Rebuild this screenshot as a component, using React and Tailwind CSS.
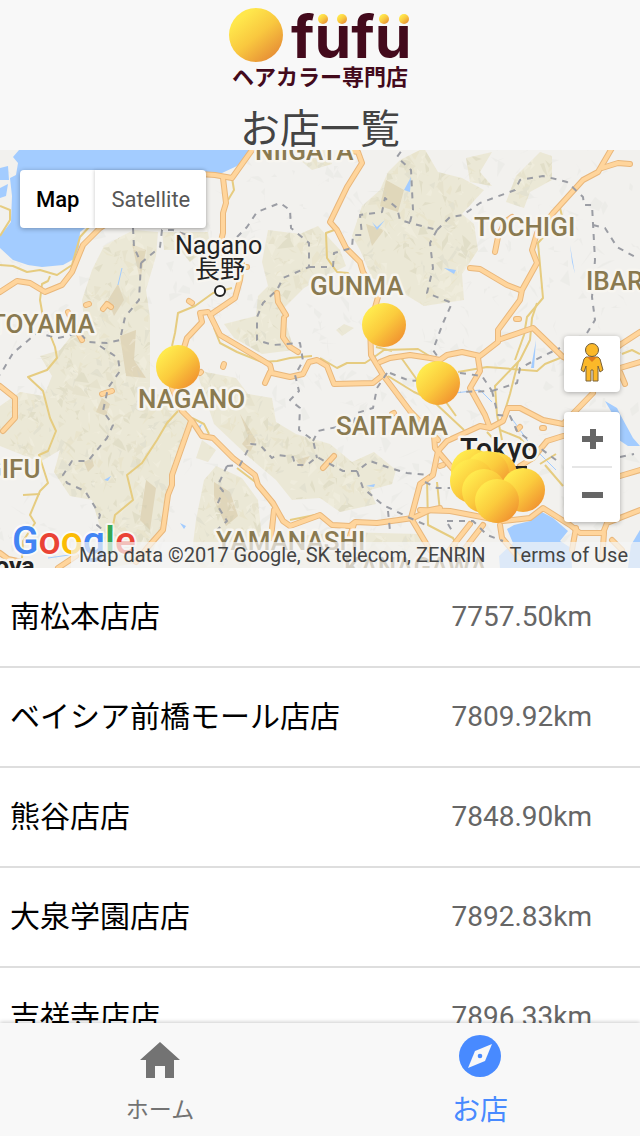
import React from "react";

const shops = [
  { name: "南松本店店", distance: "7757.50km" },
  { name: "ベイシア前橋モール店店", distance: "7809.92km" },
  { name: "熊谷店店", distance: "7848.90km" },
  { name: "大泉学園店店", distance: "7892.83km" },
  { name: "吉祥寺店店", distance: "7896.33km" },
];

const water = [
  "M19 150 L13 157 L18 163 L16 175 L10 178 L12 196 L11 222 L0 236 V248 L13 260 L28 265 L42 267 L63 265 L74 259 L79 247 L80 232 L100 216 L150 190 L200 174 L222 173 L237 166 L252 150 Z",
  "M0 168 L8 166 L9 180 L0 180 Z M0 188 L8 184 L6 196 L0 198 Z",
  "M507 529 L514 525 L530 521 L540 511 L553 518 L568 531 L560 541 L571 548 L572 568 H500 L499 556 L513 543 Z",
  "M640 530 L631 545 L628 568 H640 Z",
  "M605 401 L617 408 L621 416 L633 438 L640 446 L628 446 L619 440 L615 418 Z",
  "M404 190 L411 177 L410 192 Z M372 222 L377 230 L385 220 L377 227 Z M444 268 L456 270 L454 274 Z M104 480 L111 476 L108 481 Z M197 427 L202 424 L200 429 Z",
  "M570 245 L575 274 L572 262 Z M536 340 L531 368 L534 368 Z M366 486 L375 484 L374 487 Z M180 523 L186 526 L184 529 Z",
];

const terrain =
  "M104 246 L122 236 L134 230 L158 232 L156 256 L146 290 L150 318 L150 392 L184 402 L192 430 L174 460 L164 520 L150 560 L110 568 L104 540 L92 500 L70 496 L54 472 L60 450 L40 462 L0 446 V406 L20 392 L44 396 L52 376 L40 356 L60 350 L84 320 L82 300 L92 270 Z M162 232 L208 232 L210 246 L190 262 L180 250 L164 250 Z M268 230 L300 234 L318 226 L340 250 L346 266 L326 276 L304 288 L282 310 L294 350 L262 354 L234 338 L224 324 L256 316 L258 296 L268 286 L262 262 Z M352 236 L362 206 L380 190 L388 172 L400 160 L424 148 L438 172 L462 178 L484 190 L462 214 L474 224 L478 250 L462 274 L464 300 L424 306 L398 290 L372 278 L360 250 Z M466 158 L492 152 L480 172 L492 186 L470 182 Z M516 176 L540 152 L552 156 L552 180 L530 192 L524 208 L506 202 Z M196 370 L236 378 L248 394 L272 398 L276 422 L296 434 L330 444 L352 462 L374 452 L396 470 L392 484 L370 490 L376 504 L340 512 L320 498 L292 500 L276 480 L250 458 L214 424 Z M216 466 L242 478 L258 500 L262 540 L250 568 H190 L196 520 L204 480 Z M288 150 L326 150 L332 164 L312 170 Z M300 536 L340 532 L420 534 L430 568 H294 Z M336 330 L344 324 L354 328 L342 336 Z M202 440 L216 450 L208 462 L196 458 Z";

const ridges = [
  "M120 336 L136 330 L134 360 L146 378 L126 376 Z M108 300 L118 284 L124 300 L114 316 Z",
  "M102 398 L110 404 L106 416 L96 412 Z M84 462 L92 458 L94 466 L88 472 Z",
  "M146 480 L156 488 L150 530 L140 520 Z M132 244 L146 250 L140 280 Z",
  "M214 482 L230 492 L238 516 L226 526 L214 500 Z M240 414 L256 440 L250 452 L242 444 L248 436 Z",
  "M386 180 L404 190 L398 212 L380 206 Z M366 224 L384 230 L372 246 Z M296 460 L310 456 L302 468 Z",
];

const highways = [
  "M0 292 L17 281 L30 283 L45 292 L62 285 L72 272 L83 245 L100 228 L150 196 L200 174 L215 175 L232 178 L252 150",
  "M223 178 L226 203 L223 213 L223 233 L218 252 L242 264 L240 280 L235 298 L210 315 L220 335 L237 345 L257 357 L270 365 L272 373 L290 377 L303 374 L309 362 L317 360 L327 366 L334 384 L373 383 L383 375",
  "M270 372 L265 383",
  "M345 150 L358 152 L362 163 L347 187 L330 222 L337 230 L346 248 L360 262 L363 272 L378 297 L370 325 L371 355 L383 375 L410 411 L438 440",
  "M380 362 L390 358 L410 355 L430 358 L440 360 L447 355 L462 352 L480 356 L498 342 L498 330 L520 300 L522 290 L537 263 L532 250 L537 233 L553 213 L583 180 L598 172 L612 148",
  "M602 168 L618 163 L630 164",
  "M470 268 L480 269 L507 285 L520 290",
  "M512 217 L505 222 L498 237 L495 252",
  "M498 340 L533 328 L563 357 L590 368 L620 345 L640 332",
  "M516 319 L519 319",
  "M208 312 L200 313 L202 322 L187 338 L178 367 L172 388 L182 411 L192 421 L202 436 L213 438 L233 458 L255 475 L258 485 L273 503 L283 521 L290 526 L320 515 L332 525 L350 526 L355 522 L377 523 L413 518 L430 510 L440 508",
  "M191 421 L172 475 L172 485 L168 495 L163 530 L147 548 L136 562",
  "M0 386 L15 398 L15 418 L3 431",
  "M0 553 L8 559 L22 562 M58 568 L76 556",
  "M274 510 L271 538 M354 524 L350 536",
  "M277 293 L278 302 L286 315 M284 318 L283 337 L290 347 L298 352",
  "M323 468 L334 456 M102 394 L112 391 M86 305 L89 304 M103 309 L107 304 L111 307 M68 312 L74 325 L82 340 M189 301 L192 303 M224 364 L223 367 M200 373 L201 372 M392 414 L394 413 M246 267 L247 267",
  "M478 358 L480 371 L470 388 L485 415 L490 428 L480 426 L447 441 L438 451 L433 475 L420 484 L411 518 L430 550",
  "M434 436 L435 448 L452 468 M440 466 L443 465",
  "M490 428 L503 421 L508 408 L520 408 L543 420 L563 424 L593 393",
  "M563 436 L547 441 L533 458 L520 466 M518 429 L520 427 M542 428 L544 428",
  "M420 510 L450 511 L487 518 L503 521 L530 518 L543 508 L570 525 L580 533 L603 533 L607 523 L640 510",
  "M576 528 L572 550 M604 533 L602 560 M612 540 L622 550",
  "M483 525 L463 551 M500 525 L502 538 L519 558 M620 476 L640 470 M620 372 L625 384 M620 368 L640 362 M470 524 L448 552",
];

const roads = [
  "M0 265 L13 266 L27 272 L40 270 L57 275 L72 265 L80 237 L90 226",
  "M50 276 L48 281 L42 284 L40 300 L43 317 L55 347 L57 358 L47 370 L28 377 L43 391 L50 418 L56 431 L48 451 L39 455 L48 483 L40 491 L30 515 L35 523 L23 541 L22 558",
  "M23 495 L40 494",
  "M178 411 L167 423 L157 440 L142 463 L127 475 L133 500 L115 515 L112 531",
  "M0 206 L10 210 L10 220 L0 236",
  "M232 288 L213 293 L195 306 L178 313 L175 333 L172 346",
  "M337 229 L326 233 L327 258 L337 272 L348 273 L356 284",
  "M232 178 L234 190 L228 200",
  "M214 328 L220 343 L237 352 L262 362 L277 361 L290 358 L312 356",
  "M320 358 L337 368 L347 363 L365 363 L377 355 L384 350 L418 349 L436 360 M376 347 L392 351 M400 356 L420 384 M388 376 L414 392 L432 400",
  "M560 208 L562 216 L538 243 L543 298 L527 317 L524 335 L515 360",
  "M537 303 L532 318 L530 340 L520 360 L495 386 L497 415 L502 440",
  "M518 362 L510 394 L502 420",
  "M458 372 L487 367 L537 371 L545 364 L560 358",
  "M433 401 L464 430 M446 402 L456 416 M237 468 L258 484 L272 506 M290 520 L320 514",
  "M545 465 L563 486 M540 464 L556 454 M427 478 L428 525 L453 538 L460 552",
  "M192 418 L204 424 L209 434 M500 430 L520 438 L530 450 M487 432 L498 444",
  "M622 354 L632 350 L640 354 M596 376 L620 352",
  "M437 482 L440 512",
];

const borders = [
  "M133 228 L134 247 L141 263 L139 300 L125 317 L120 340 L107 343 L88 342 L80 333 L58 338 L37 333 L13 353 L0 375",
  "M141 263 L160 247 L162 230 L173 230 L187 235",
  "M100 346 L118 358 L120 371 L108 388 L103 411 L113 425 L107 438 L88 461 L72 461 L63 475 L67 483 L85 491 L100 515 L97 525 L104 531",
  "M237 237 L247 227 L257 212 L280 203 L290 210 L291 228 L309 243 L309 267 L283 278 L277 290 L263 303 L257 317 L257 340 L273 345 L300 343 L303 361 L295 375 L299 391 L290 400 L300 408 L299 430 L313 440 L317 458",
  "M309 267 L333 267 L334 253 L352 248 L353 235 L362 235 L360 215 L382 212 L385 198 L397 208 L400 220 L410 223 L437 230",
  "M410 222 L413 210 L411 170 L397 157 L402 150",
  "M437 230 L450 217 L463 215 L480 203 L515 190 L520 180 L543 176 L567 182 L583 197 L584 205 L592 205 L595 260 L592 297 L595 320 L587 333",
  "M593 225 L605 228 L617 247 L637 258",
  "M437 230 L430 243 L433 268 L427 293 L452 303 L443 323 L433 350 L440 360",
  "M387 373 L377 388 L373 408 L357 413 L353 424 L327 429 L318 431 L313 441 M390 373 L410 381 L428 380",
  "M227 466 L240 465 L251 444 L260 445 L272 458 L277 455 L293 457 L295 465 L307 465 L317 457 L343 471 L357 471 L370 461 L390 468 L407 473 L430 475",
  "M357 471 L363 488 L383 505 L410 518 L428 526 M388 511 L390 531",
  "M227 466 L218 485 L223 491 L217 505 L227 521 L217 530",
  "M460 373 L482 376 L492 391 L460 392 M492 391 L517 383 L520 368 L545 355 L560 348",
  "M492 391 L498 415 L510 416 L517 431 L540 448 L560 463",
  "M425 482 L437 488 L450 488 M447 521 L473 521 L487 535 L503 541 M448 524 L454 534 M620 457 L634 454",
];

const labels = [
  { text: "NIIGATA", x: 255, y: 160 },
  { text: "TOYAMA", x: -10, y: 333 },
  { text: "TOCHIGI", x: 474, y: 236 },
  { text: "GUNMA", x: 310, y: 295 },
  { text: "IBARAKI", x: 586, y: 290 },
  { text: "NAGANO", x: 138, y: 408 },
  { text: "SAITAMA", x: 336, y: 435 },
  { text: "GIFU", x: -16, y: 478 },
  { text: "YAMANASHI", x: 216, y: 550 },
  { text: "KANAGAWA", x: 344, y: 576 },
];

const markers = [
  [178, 367],
  [384, 325],
  [438, 383],
  [473, 471],
  [495, 474],
  [487, 473],
  [472, 481],
  [484, 491],
  [523, 490],
  [497, 501],
];

// Small shaded triangles that give the mountains their relief
const makeFacets = (count, size, tones) => {
  let seed = 7;
  const rand = () => {
    seed = (seed * 16807) % 2147483647;
    return seed / 2147483647;
  };
  return Array.from({ length: count }, () => {
    const x = Math.round(rand() * 640);
    const y = Math.round(150 + rand() * 418);
    const p = () => Math.round((rand() - 0.5) * size);
    return {
      d: `M${x} ${y} l${p()} ${p() - 3} l${p()} ${p()} l${p()} ${p() + 3} Z`,
      fill: tones[Math.floor(rand() * tones.length)],
    };
  });
};

const facets = makeFacets(4000, 14, [
  "#cfcbb0",
  "#ddd8bd",
  "#f6f4e8",
  "#d3d3c6",
  "#e4ddbc",
]);
const hills = makeFacets(500, 16, ["#c9c9c4"]);

const Logo = () => (
  <svg
    viewBox="230 8 182 80"
    className="h-20 w-[182px]"
    role="img"
    aria-label="füfü ヘアカラー専門店"
  >
    <defs>
      <linearGradient id="sun" x1="0.15" y1="0.1" x2="0.85" y2="0.95">
        <stop offset="0.1" stopColor="#ffe74c" />
        <stop offset="0.5" stopColor="#f9c83f" />
        <stop offset="1" stopColor="#e58a35" />
      </linearGradient>
    </defs>
    <circle cx="257" cy="35" r="27" fill="url(#sun)" />
    <text
      x="292"
      y="58"
      fontSize="59"
      fontWeight="700"
      fill="#430a1c"
      className="font-['Inter',sans-serif]"
    >
      fufu
    </text>
    <g fill="url(#sun)">
      <circle cx="324" cy="19" r="5" />
      <circle cx="343" cy="19" r="5" />
      <circle cx="385" cy="19" r="5" />
      <circle cx="405" cy="19" r="5" />
    </g>
    <text
      x="233"
      y="85"
      fontSize="22"
      fontWeight="700"
      fill="#430a1c"
      className="font-['Noto_Sans_CJK_JP',sans-serif]"
    >
      ヘアカラー専門店
    </text>
  </svg>
);

const MapCanvas = () => (
  <svg
    viewBox="0 150 640 418"
    preserveAspectRatio="xMidYMid slice"
    className="block h-full w-full"
  >
    <defs>
      <linearGradient id="pin" x1="0.1" y1="0.1" x2="0.9" y2="0.9">
        <stop offset="0.1" stopColor="#ffe94d" />
        <stop offset="0.5" stopColor="#fbcb3d" />
        <stop offset="1" stopColor="#f08f2f" />
      </linearGradient>
      <clipPath id="terrain">
        <path d={terrain} />
      </clipPath>
    </defs>
    <rect x="0" y="150" width="640" height="418" fill="#f2f1ee" />
    <g opacity="0.12">
      {hills.map((f, i) => (
        <path key={i} d={f.d} fill={f.fill} />
      ))}
    </g>
    <path d={terrain} fill="#ece8d6" />
    <g fill="#d9cba8" opacity="0.6">
      {ridges.map((d) => (
        <path key={d} d={d} />
      ))}
    </g>
    <g clipPath="url(#terrain)" opacity="0.35">
      {facets.map((f, i) => (
        <path key={i} d={f.d} fill={f.fill} />
      ))}
    </g>
    {water.map((d) => (
      <path key={d} d={d} fill="#a3ccff" />
    ))}
    <path
      d="M455 393 L480 390 L492 402 M510 416 L530 444 L556 470 M118 285 L122 268 M48 558 L76 554"
      fill="none"
      stroke="#a3ccff"
    />

    <g fill="none" strokeLinejoin="round">
      {roads.map((d) => (
        <path key={d} d={d} stroke="#e6cc80" strokeWidth="2" />
      ))}
      <g strokeLinecap="round">
        {highways.map((d) => (
          <path key={d} d={d} stroke="#e9b77b" strokeWidth="6" />
        ))}
        {highways.map((d) => (
          <path key={d} d={d} stroke="#ffd59c" strokeWidth="4" />
        ))}
      </g>
      {borders.map((d) => (
        <path
          key={d}
          d={d}
          stroke="#9b9da4"
          strokeWidth="2"
          strokeDasharray="6 6"
        />
      ))}
    </g>

    <g
      stroke="#f7f5f0"
      strokeWidth="5"
      strokeLinejoin="round"
      paintOrder="stroke"
      className="font-['Roboto','Noto_Sans_CJK_JP',sans-serif]"
    >
      <g fill="#8a7a50" fontSize="26" fontWeight="500">
        {labels.map((label) => (
          <text key={label.text} x={label.x} y={label.y}>
            {label.text}
          </text>
        ))}
      </g>
      <g fill="#222222">
        <text x="195" y="278" fontSize="25">
          長野
        </text>
        <text x="175" y="254" fontSize="25">
          Nagano
        </text>
        <text x="460" y="459" fontSize="29" fontWeight="500">
          Tokyo
        </text>
        <text x="-5" y="575" fontSize="25" fontWeight="700">
          oya
        </text>
      </g>
    </g>
    <rect x="515" y="466" width="12" height="3" fill="#222222" />
    <circle cx="220" cy="291" r="5" fill="#ffffff" stroke="#222222" strokeWidth="2" />

    {markers.map(([x, y]) => (
      <circle key={`${x}-${y}`} cx={x} cy={y} r="22" fill="url(#pin)" />
    ))}
  </svg>
);

const Pegman = () => (
  <svg viewBox="0 0 24 42" className="h-[42px] w-6" aria-hidden="true">
    <path
      d="M6 14 H18 L20 16 L23 27 L20 29 L18 23 V38 H13 V27 H11 V38 H6 V23 L4 29 L1 27 L4 16 Z"
      fill="#fbb829"
      stroke="#7a6238"
      strokeWidth="1"
      strokeLinejoin="round"
    />
    <path d="M7 14 H17 L12 19 Z" fill="#e07a1c" />
    <circle cx="12" cy="7" r="6.5" fill="#fbb829" stroke="#6b5a3a" strokeWidth="1" />
  </svg>
);

const MapSection = () => (
  <section className="relative h-[418px] shrink-0 overflow-hidden">
    <MapCanvas />

    <div className="absolute left-5 top-5 flex h-[58px] rounded-sm bg-white text-[22px] shadow-[0_1px_5px_rgba(0,0,0,0.3)]">
      <button className="px-4 font-medium text-black">Map</button>
      <button className="px-4 text-[#565656] shadow-[-1px_0_3px_rgba(0,0,0,0.15)]">
        Satellite
      </button>
    </div>

    <div className="absolute bottom-[46px] right-5 flex w-14 flex-col gap-5">
      <button
        aria-label="Street View"
        className="flex h-14 items-center justify-center rounded-sm bg-white shadow-[0_1px_5px_rgba(0,0,0,0.3)]"
      >
        <Pegman />
      </button>
      <div className="flex flex-col items-center rounded-sm bg-white shadow-[0_1px_5px_rgba(0,0,0,0.3)]">
        <button
          aria-label="Zoom in"
          className="flex h-[54px] w-full items-center justify-center"
        >
          <svg viewBox="0 0 22 22" className="h-[22px] w-[22px]" fill="#666666">
            <path d="M9 1 H15 V8 H22 V14 H15 V21 H9 V14 H1 V8 H9 Z" />
          </svg>
        </button>
        <div className="h-0.5 w-10 bg-[#e6e6e6]" />
        <button
          aria-label="Zoom out"
          className="flex h-[54px] w-full items-center justify-center"
        >
          <svg viewBox="0 0 22 22" className="h-[22px] w-[22px]" fill="#666666">
            <path d="M1 8 H22 V14 H1 Z" />
          </svg>
        </button>
      </div>
    </div>

    <a
      href="#google"
      aria-label="Google"
      className="absolute bottom-0 left-3 h-12 w-32"
    >
      <svg viewBox="0 0 128 48" className="h-12 w-32">
        <text
          x="0"
          y="34"
          fontSize="39"
          fontWeight="500"
          stroke="#ffffff"
          strokeOpacity="0.7"
          strokeWidth="4"
          strokeLinejoin="round"
          paintOrder="stroke"
          className="font-['Roboto',sans-serif]"
        >
          <tspan fill="#4285f4">G</tspan>
          <tspan fill="#ea4335">o</tspan>
          <tspan fill="#fbbc05">o</tspan>
          <tspan fill="#4285f4">g</tspan>
          <tspan fill="#34a853">l</tspan>
          <tspan fill="#ea4335">e</tspan>
        </text>
      </svg>
    </a>

    <div className="absolute bottom-0 right-0 flex h-[26px] items-center gap-6 whitespace-nowrap bg-[#f5f5f5]/70 pl-2 pr-3 text-xl text-[#444444]">
      <span>Map data ©2017 Google, SK telecom, ZENRIN</span>
      <a href="#terms">Terms of Use</a>
    </div>
  </section>
);

const HomeIcon = () => (
  <svg viewBox="0 0 42 42" className="h-[42px] w-[42px]" fill="currentColor">
    <path d="M21 5 L41 23 H35 V41 H26 V29 H16 V41 H7 V23 H1 Z" />
  </svg>
);

const CompassIcon = () => (
  <svg viewBox="0 0 42 42" className="h-[42px] w-[42px]">
    <circle cx="21" cy="21" r="21" fill="currentColor" />
    <path d="M33 9 L26 26 L9 33 L16 16 Z" fill="#f8f8f8" />
    <circle cx="21" cy="21" r="2.3" fill="currentColor" />
  </svg>
);

const App = () => {
  return (
    <div className="flex h-screen flex-col overflow-hidden bg-white font-['Roboto','Noto_Sans_CJK_JP',sans-serif]">
      <header className="flex h-[150px] shrink-0 flex-col items-center bg-[#f8f8f8] pt-2">
        <Logo />
        <h1 className="mt-[22px] text-[40px] leading-10 text-[#444444]">
          お店一覧
        </h1>
      </header>

      <MapSection />

      <ul className="min-h-0 flex-1 overflow-y-auto [scrollbar-width:none]">
        {shops.map((shop) => (
          <li
            key={shop.name}
            className="flex h-[100px] items-center justify-between border-b-2 border-[#dedede] pl-2.5 pr-12"
          >
            <span className="text-3xl text-black">{shop.name}</span>
            <span className="text-[28px] text-[#666666]">{shop.distance}</span>
          </li>
        ))}
      </ul>

      <nav className="relative flex h-[113px] shrink-0 bg-[#f8f8f8] shadow-[0_-1px_4px_rgba(0,0,0,0.2)]">
        <a
          href="#home"
          className="flex flex-1 flex-col items-center gap-2 pt-3.5 text-[#737373]"
        >
          <HomeIcon />
          <span className="text-[23px] leading-12">ホーム</span>
        </a>
        <a
          href="#shops"
          aria-current="page"
          className="flex flex-1 flex-col items-center gap-2.5 pt-3 text-[#488aff]"
        >
          <CompassIcon />
          <span className="text-[28px] leading-12">お店</span>
        </a>
      </nav>
    </div>
  );
};

export default App;
